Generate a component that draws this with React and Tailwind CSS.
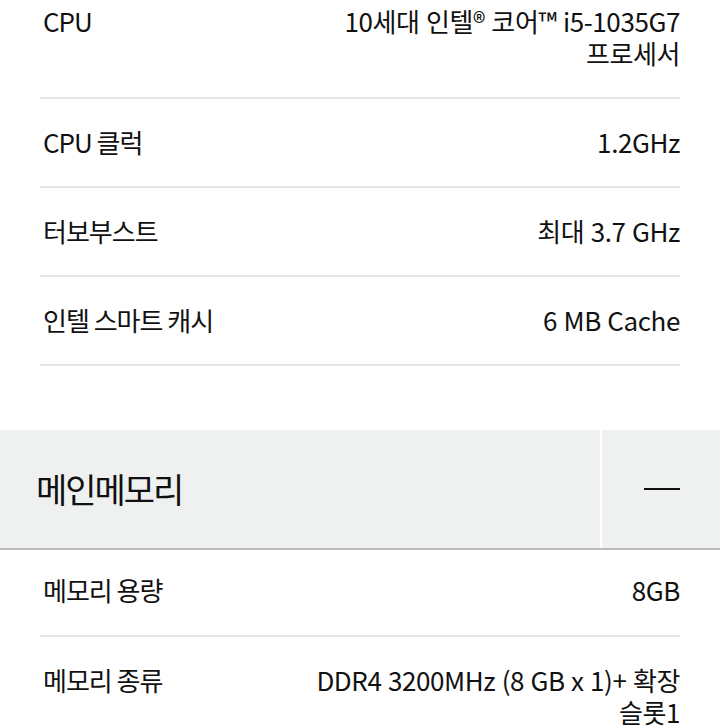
import React from "react";

const cpuSpecs = [
  { label: "CPU", value: "10세대 인텔® 코어™ i5-1035G7\n프로세서" },
  { label: "CPU 클럭", value: "1.2GHz" },
  { label: "터보부스트", value: "최대 3.7 GHz" },
  { label: "인텔 스마트 캐시", value: "6 MB Cache" },
];

const memorySpecs = [
  { label: "메모리 용량", value: "8GB" },
  { label: "메모리 종류", value: "DDR4 3200MHz (8 GB x 1)+ 확장\n슬롯1" },
];

function SpecRow({ label, value, top = "pt-[27px]", bottom = "pb-[28px]" }) {
  return (
    <div className={`flex justify-between border-b-2 border-[#e5e5e5] ${top} ${bottom}`}>
      <div className="pl-[3px]">{label}</div>
      <div className="text-right whitespace-pre-line tracking-[-0.4px] [word-spacing:1px]">
        {value}
      </div>
    </div>
  );
}

export default function App() {
  return (
    <div
      className="bg-white text-[#111] text-[26px] leading-[32px] tracking-[-1px] h-[726px] overflow-hidden"
      style={{ fontFamily: '"Noto Sans CJK KR", "Noto Sans", sans-serif' }}
    >
      <div className="px-[40px]">
        {cpuSpecs.map((s, i) => (
          <SpecRow key={s.label} {...s} top={i === 0 ? "pt-[5px]" : "pt-[27px]"} />
        ))}
      </div>

      <div className="mt-[64px] flex bg-[#eff1f1] border-b-2 border-[#bcbcbc] h-[120px]">
        <div className="flex-1 flex items-center pl-[36px] text-[34px] tracking-[-2px]">
          메인메모리
        </div>
        <div className="w-[2px] bg-white" />
        <div className="w-[118px] flex items-center justify-end pr-[40px]">
          <span className="block w-[36px] h-[2px] bg-[#111]" />
        </div>
      </div>

      <div className="px-[40px]">
        {memorySpecs.map((s, i) => (
          <SpecRow
            key={s.label}
            {...s}
            top={i === 0 ? "pt-[24px]" : "pt-[27px]"}
            bottom="pb-[29px]"
          />
        ))}
      </div>
    </div>
  );
}
